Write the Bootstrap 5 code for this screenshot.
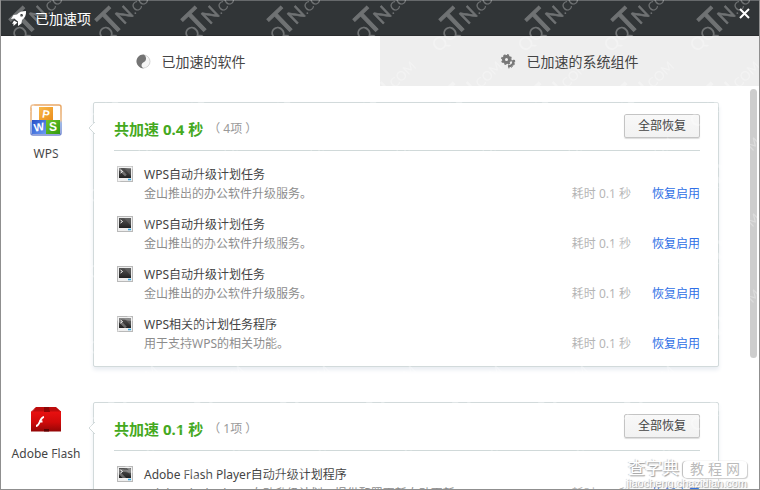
<!DOCTYPE html>
<html lang="zh-CN">
<head>
<meta charset="utf-8">
<meta name="viewport" content="width=device-width, initial-scale=1">
<title>已加速项</title>
<link href="https://cdn.jsdelivr.net/npm/bootstrap@5.3.0/dist/css/bootstrap.min.css" rel="stylesheet">
<style>
body { font-family: "Noto Sans", "Noto Sans CJK SC", sans-serif; font-size: 12px; line-height: 19px; color: #444; background: #fff; }
.win { border: 1px solid #8f8f8f; border-top: 0; }
.title-bar { height: 36px; background: #313537; border-top: 1px solid #66696b; color: #fff; padding: 0 9px; box-shadow: inset 0 -1px #2a2c2e; }
.title-bar h1 { font-size: 14px; line-height: 20px; font-weight: 400; }
.close-btn { margin-bottom: 10px; }
.tab-btn { height: 50px; border: 0; background: #eee; font-size: 14px; color: #444; gap: 11px; }
.tab-btn[aria-selected="true"] { background: #fff; }
.list-area { padding-top: 16px; }
.soft { margin-bottom: 35px; padding-right: 40px; }
.soft-name { width: 92px; padding-top: 2px; padding-right: 2px; }
.soft-name span { margin-top: 8px; }
.panel { border: 1px solid #d2dadb; border-radius: 2px; background: #fff; padding: 0 18px 13px 20px; box-shadow: 0 3px 4px #e9edf2; }
.caret-mark { left: -6px; top: 19px; }
.panel-top { height: 48px; border-bottom: 1px solid #d0d9d9; padding-top: 4px; }
.panel-top h2 { font-size: 15px; line-height: 20px; font-weight: 700; color: #45a91e; }
.count { color: #999; margin-left: 5px; }
.all-btn { width: 76px; height: 24px; margin-bottom: 5px; border: 1px solid #c4c4c4; border-radius: 2px; background: linear-gradient(#f8f8f8, #f2f2f2); color: #444; box-shadow: 0 1px 1px #ddd; font-size: 12px; line-height: 20px; }
.tasks { padding-top: 14px; gap: 12px; }
.task-ico { margin: 1px 11px 0 3px; }
.desc { color: #8c8c8c; }
.cost { color: #b5b5b5; }
.link-act { color: #2e6fe6; margin-left: 21px; text-decoration: none; }
.thumb { right: 2px; top: 89px; width: 7px; height: 269px; border-radius: 4px; background: #cdcdcd; }
.overlay { inset: 0; pointer-events: none; }
.site-tag { right: 12px; bottom: 0; pointer-events: none; color: #fff; text-shadow: 1px 1px 1px #999, -1px 0 1px #ccc; font: 11px/11px "Liberation Sans", "Noto Sans CJK SC", sans-serif; }
.site-tag b { font-size: 17px; line-height: 18px; font-weight: 400; }
.site-tag i { font-style: normal; font-size: 14px; line-height: 17px; color: #bbb; text-shadow: none; background: #fff; border-radius: 4px; box-shadow: 1px 1px 1px #ccc, -1px 0 1px #bbb; padding: 0 7px; gap: 4px; }
</style>
<script src="https://cdn.jsdelivr.net/npm/bootstrap@5.3.0/dist/js/bootstrap.bundle.min.js"></script>
</head>
<body>
<svg width="0" height="0" class="position-absolute" aria-hidden="true">
  <defs>
    <linearGradient id="gDark" x1="0" y1="0" x2="0" y2="1"><stop offset="0" stop-color="#555"/><stop offset="1" stop-color="#222"/></linearGradient>
    <symbol id="term" viewBox="0 0 16 16">
      <rect x=".5" y=".5" width="15" height="15" fill="#eee" stroke="#b9b9b9"/>
      <rect x="2" y="2" width="12" height="10" fill="url(#gDark)"/>
      <path d="M7 2h7v8z" fill="#777" opacity=".4"/>
      <path d="M3.500 4l2 1.500-2 1.500" fill="none" stroke="#fff"/>
      <path d="M11 13.500h3" stroke="#36a8e0" stroke-width="1.500"/>
    </symbol>
    <symbol id="caret" viewBox="0 0 7 12"><path d="M7 0L1 6l6 6" fill="#fff" stroke="#d2dadb"/></symbol>
  </defs>
</svg>
<main class="win vh-100 overflow-hidden position-relative d-flex flex-column">
  <header class="title-bar d-flex align-items-center flex-shrink-0">
    <svg width="17" height="17" viewBox="0 0 17 17" aria-hidden="true"><path fill="#fff" fill-rule="evenodd" d="M16 1C12 1 9 2 7 4.500L3.500 5 1 9l3.500-.5L6 10l2 1.500L8 16l3.500-2.500.5-3.500C15 8 16.300 5 16 1zM11.500 4a1.400 1.400 0 1 1 0 2.800 1.400 1.400 0 0 1 0-2.800zM4 10.500L2 14l1.500-.5v2.500l4-3.500z"/></svg>
    <h1 class="mb-0 ms-2">已加速项</h1>
    <button type="button" class="close-btn btn p-0 border-0 ms-auto d-flex" aria-label="关闭"><svg width="11" height="11" viewBox="0 0 11 11"><path d="M1 1l9 9M10 1l-9 9" stroke="#fff" stroke-width="2"/></svg></button>
  </header>
  <div class="row g-0 flex-shrink-0" role="tablist">
    <div class="col"><button type="button" role="tab" aria-selected="true" class="tab-btn w-100 d-flex align-items-center justify-content-center">
      <svg width="15" height="15" viewBox="0 0 15 15" aria-hidden="true"><circle cx="7.500" cy="7.500" r="6.500" fill="#f5f5f5" stroke="#d5d5d5"/><path d="M7.500.5C3 .5.500 4 .500 7.500S4 14.500 8 14.500c-3-1-3.500-5 0-6.500S10 1 7.500.5z" fill="#747474"/></svg>
      <span>已加速的软件</span></button></div>
    <div class="col"><button type="button" role="tab" aria-selected="false" class="tab-btn w-100 d-flex align-items-center justify-content-center">
      <svg width="15" height="15" viewBox="0 0 15 15" aria-hidden="true"><circle cx="5.500" cy="5.500" r="3" fill="none" stroke="#777" stroke-width="3"/><circle cx="5.500" cy="5.500" r="4.700" fill="none" stroke="#777" stroke-width="1.500" stroke-dasharray="2 1.700"/><path d="M12 6c1.200 3.500-.8 6-5 6.500" fill="none" stroke="#777" stroke-width="2.400"/><path d="M13.500 6c1 4.500-1.500 7.500-6 8" fill="none" stroke="#777" stroke-dasharray="2 1.500"/></svg>
      <span>已加速的系统组件</span></button></div>
  </div>
  <div class="list-area flex-grow-1 overflow-hidden">
    <section class="soft d-flex">
      <div class="soft-name d-flex flex-column align-items-center flex-shrink-0">
        <svg width="32" height="32" viewBox="0 0 32 32" aria-hidden="true">
          <defs><linearGradient id="gEdge" x1="0" y1="0" x2="0" y2="1"><stop offset="0" stop-color="#e9a765"/><stop offset=".5" stop-color="#e9b47d"/><stop offset=".6" stop-color="#7da0e0"/><stop offset="1" stop-color="#7387d0"/></linearGradient>
          <linearGradient id="gO" x1="0" y1="0" x2="1" y2="1"><stop offset="0" stop-color="#f9b94a"/><stop offset="1" stop-color="#ea8d1c"/></linearGradient>
          <linearGradient id="gB" x1="0" y1="0" x2="1" y2="1"><stop offset="0" stop-color="#2750c8"/><stop offset="1" stop-color="#6b9cf4"/></linearGradient>
          <linearGradient id="gG" x1="0" y1="0" x2="1" y2="1"><stop offset="0" stop-color="#73c52a"/><stop offset="1" stop-color="#2f9a12"/></linearGradient></defs>
          <rect x="1" y="1" width="30" height="30" rx="2" fill="#fff" stroke="url(#gEdge)" stroke-width="1.500"/>
          <rect x="9" y="3" width="14" height="13" fill="url(#gO)"/><rect x="2" y="16" width="14" height="14" fill="url(#gB)"/><rect x="16" y="16" width="14" height="14" fill="url(#gG)"/>
          <g fill="#fff" font-family="Liberation Sans, sans-serif" font-weight="700" text-anchor="middle"><text x="16" y="14" font-size="11" transform="rotate(10 16 10)">P</text><text x="9" y="27" font-size="11" transform="rotate(-10 9 23)">W</text><text x="23" y="27" font-size="12">S</text></g>
        </svg>
        <span>WPS</span>
      </div>
      <div class="panel flex-grow-1 position-relative">
        <svg class="caret-mark position-absolute" width="7" height="12" aria-hidden="true"><use href="#caret"/></svg>
        <div class="panel-top d-flex align-items-center">
          <h2 class="mb-0">共加速 0.4 秒</h2><span class="count">（ 4项 ）</span>
          <button type="button" class="all-btn btn p-0 ms-auto">全部恢复</button>
        </div>
        <ul class="tasks list-unstyled mb-0 d-flex flex-column">
          <li class="d-flex align-items-end"><svg class="task-ico align-self-start flex-shrink-0" width="16" height="16" aria-hidden="true"><use href="#term"/></svg><div class="me-auto"><div>WPS自动升级计划任务</div><div class="desc">金山推出的办公软件升级服务。</div></div><span class="cost">耗时 0.1 秒</span><a href="#" class="link-act">恢复启用</a></li>
          <li class="d-flex align-items-end"><svg class="task-ico align-self-start flex-shrink-0" width="16" height="16" aria-hidden="true"><use href="#term"/></svg><div class="me-auto"><div>WPS自动升级计划任务</div><div class="desc">金山推出的办公软件升级服务。</div></div><span class="cost">耗时 0.1 秒</span><a href="#" class="link-act">恢复启用</a></li>
          <li class="d-flex align-items-end"><svg class="task-ico align-self-start flex-shrink-0" width="16" height="16" aria-hidden="true"><use href="#term"/></svg><div class="me-auto"><div>WPS自动升级计划任务</div><div class="desc">金山推出的办公软件升级服务。</div></div><span class="cost">耗时 0.1 秒</span><a href="#" class="link-act">恢复启用</a></li>
          <li class="d-flex align-items-end"><svg class="task-ico align-self-start flex-shrink-0" width="16" height="16" aria-hidden="true"><use href="#term"/></svg><div class="me-auto"><div>WPS相关的计划任务程序</div><div class="desc">用于支持WPS的相关功能。</div></div><span class="cost">耗时 0.1 秒</span><a href="#" class="link-act">恢复启用</a></li>
        </ul>
      </div>
    </section>
    <section class="soft d-flex">
      <div class="soft-name d-flex flex-column align-items-center flex-shrink-0">
        <svg width="32" height="32" viewBox="0 0 32 32" aria-hidden="true">
          <defs><linearGradient id="gR" x1="0" y1="0" x2="0" y2="1"><stop offset="0" stop-color="#ea1010"/><stop offset=".55" stop-color="#d00a0a"/><stop offset="1" stop-color="#930606"/></linearGradient></defs>
          <path d="M1 7h30v20.500H1z" fill="url(#gR)"/><path d="M6 3h20l5 4.500H1z" fill="#bd0c0c"/><path d="M14 3h5l1 5h-6z" fill="#8d0606"/><path d="M14 25h5v2.500h-5z" fill="#5c0303"/>
          <path d="M14 13c-4.500.5-4 9-8 9M9 17.500h3.500" fill="none" stroke="#fff" stroke-width="1.800"/>
        </svg>
        <span>Adobe Flash</span>
      </div>
      <div class="panel flex-grow-1 position-relative">
        <svg class="caret-mark position-absolute" width="7" height="12" aria-hidden="true"><use href="#caret"/></svg>
        <div class="panel-top d-flex align-items-center">
          <h2 class="mb-0">共加速 0.1 秒</h2><span class="count">（ 1项 ）</span>
          <button type="button" class="all-btn btn p-0 ms-auto">全部恢复</button>
        </div>
        <ul class="tasks list-unstyled mb-0 d-flex flex-column">
          <li class="d-flex align-items-end"><svg class="task-ico align-self-start flex-shrink-0" width="16" height="16" aria-hidden="true"><use href="#term"/></svg><div class="me-auto"><div>Adobe Flash Player自动升级计划程序</div><div class="desc">Adobe Flash Player自动升级计划，提供配置更新自动更新。</div></div><span class="cost">耗时 0.1 秒</span><a href="#" class="link-act">恢复启用</a></li>
        </ul>
      </div>
    </section>
  </div>
  <div class="thumb position-absolute"></div>
  <svg class="overlay position-absolute w-100 h-100" aria-hidden="true">
    <defs>
      <g id="wm" font-family="Lato, sans-serif" fill="#fff"><text transform="rotate(-44)"><tspan font-size="18">QQ</tspan><tspan font-size="34" stroke="#fff" stroke-width="1" dx="-6">T</tspan><tspan font-size="20" stroke="#fff" stroke-width=".5" dx="-3">N</tspan><tspan font-size="13">.COM</tspan></text></g>
      <pattern id="wmTile" width="86" height="76" patternUnits="userSpaceOnUse">
        <use href="#wm" x="8" y="53"/><use href="#wm" x="-78" y="53"/><use href="#wm" x="8" y="129"/><use href="#wm" x="-78" y="129"/>
      </pattern>
    </defs>
    <rect width="100%" height="100%" fill="url(#wmTile)" opacity=".3"/>
  </svg>
  <div class="site-tag position-absolute d-flex flex-column align-items-end">
    <div class="d-flex align-items-center"><b>查字典</b><i class="d-flex ms-1"><span>教</span><span>程</span><span>网</span></i></div>
    <span>jiaocheng.chazidian.com</span>
  </div>
</main>
</body>
</html>
